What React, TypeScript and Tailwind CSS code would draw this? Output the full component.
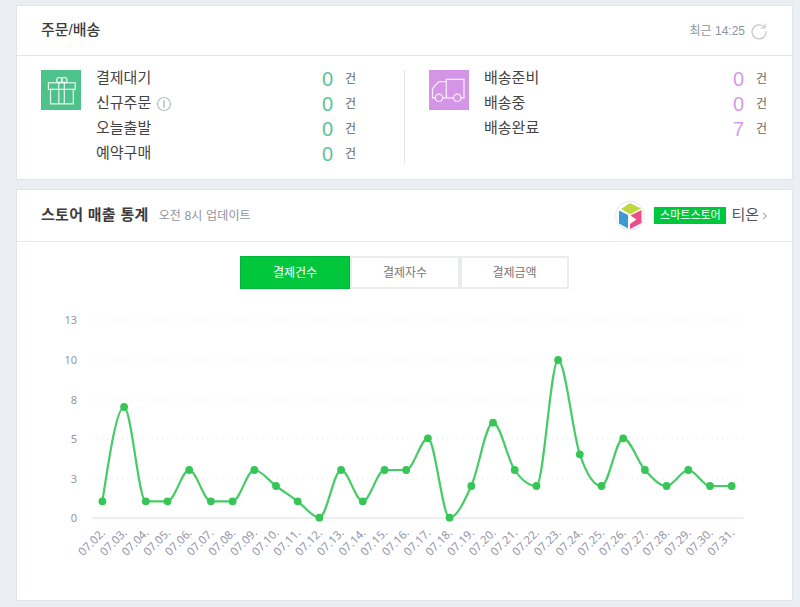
const KR = "font-['Liberation_Sans','Noto_Sans_CJK_KR',sans-serif]";

const dates = ["02","03","04","05","06","07","08","09","10","11","12","13","14","15","16","17","18","19","20","21","22","23","24","25","26","27","28","29","30","31"];
const vals = [1,7,1,1,3,1,1,3,2,1,0,3,1,3,3,5,0,2,6,3,2,10,4,2,5,3,2,3,2,2];
const yOf: Record<number, number> = {0:517.7,1:501.3,2:486,3:470,4:454.3,5:438.3,6:422.7,7:407,10:360};
const pts = vals.map((v, i) => [102.4 + i * 21.7, yOf[v]] as const);

function monotonePath(p: readonly (readonly [number, number])[]) {
  const n = p.length;
  const s: number[] = [];
  for (let i = 0; i < n - 1; i++) s.push((p[i + 1][1] - p[i][1]) / (p[i + 1][0] - p[i][0]));
  const t: number[] = new Array(n).fill(0);
  for (let i = 1; i < n - 1; i++) {
    const h = p[i + 1][0] - p[i][0];
    const h0 = p[i][0] - p[i - 1][0];
    const pp = (s[i - 1] * h + s[i] * h0) / (h0 + h);
    const sign = (a: number) => (a < 0 ? -1 : 1);
    t[i] = (sign(s[i - 1]) + sign(s[i])) * Math.min(Math.abs(s[i - 1]), Math.abs(s[i]), 0.5 * Math.abs(pp)) || 0;
  }
  t[0] = (3 * s[0] - t[1]) / 2;
  t[n - 1] = (3 * s[n - 2] - t[n - 2]) / 2;
  let d = `M${p[0][0]},${p[0][1]}`;
  for (let i = 0; i < n - 1; i++) {
    const dx = (p[i + 1][0] - p[i][0]) / 3;
    d += `C${(p[i][0] + dx).toFixed(1)},${(p[i][1] + dx * t[i]).toFixed(1)} ${(p[i + 1][0] - dx).toFixed(1)},${(p[i + 1][1] - dx * t[i + 1]).toFixed(1)} ${p[i + 1][0].toFixed(1)},${p[i + 1][1]}`;
  }
  return d;
}

function Row({ label, n, color, info }: { label: string; n: number; color: string; info?: boolean }) {
  return (
    <div className="flex items-center h-[25px]">
      <span className="flex-1 flex items-center text-[15px] text-[#444444]">
        {label}
        {info && (
          <svg width="16" height="16" viewBox="0 0 16 16" className="ml-[5px]">
            <circle cx="8" cy="8" r="6.5" fill="none" stroke="#b9bdc4" strokeWidth="1.2" />
            <rect x="7.2" y="4.5" width="1.6" height="7" fill="#b9bdc4" />
          </svg>
        )}
      </span>
      <span className={`text-[20px] leading-none ${color}`}>{n}</span>
      <span className="ml-[12px] w-[11px] text-[12px] text-[#666666]">건</span>
    </div>
  );
}

export default function App() {
  return (
    <div className={`w-[800px] h-[607px] overflow-hidden bg-[#ebeef3] pl-[16px] pt-[5px] ${KR}`}>
      <section className="w-[777px] h-[175px] bg-white border border-[#e1e4ea]">
        <header className="h-[50px] border-b border-[#e3e5ec] flex items-center justify-between pl-[24px] pr-[24px]">
          <h2 className="text-[15px] font-medium text-[#3c3c3c]">주문/배송</h2>
          <div className="flex items-center text-[12px] text-[#8f939a]">
            <span>최근 14:25</span>
            <svg width="18" height="18" viewBox="0 0 18 18" className="ml-[5px]">
              <path d="M14.6 5.6A7 7 0 1 0 16 9" fill="none" stroke="#c4c8ce" strokeWidth="1.2" />
              <path d="M15 1.5V6H10.6" fill="none" stroke="#c4c8ce" strokeWidth="1.2" />
            </svg>
          </div>
        </header>
        <div className="flex pl-[24px] pt-[14px]">
          <div className="w-[40px] h-[40px] bg-[#4dc28b]">
            <svg width="40" height="40" viewBox="0 0 40 40" fill="none" stroke="#ffffff" strokeOpacity="0.85" strokeWidth="1.2">
              <rect x="7.4" y="12.800" width="26.800" height="6.500" />
              <path d="M9.500 19.300V33.800H32.300V19.300" />
              <path d="M17.800 12.800V33.800M23.300 12.800V33.800" />
              <circle cx="18.300" cy="10" r="2.700" />
              <circle cx="23.300" cy="10" r="2.700" />
            </svg>
          </div>
          <div className="w-[260px] ml-[15px] -mt-[4px]">
            <Row label="결제대기" n={0} color="text-[#5cc497]" />
            <Row label="신규주문" n={0} color="text-[#5cc497]" info />
            <Row label="오늘출발" n={0} color="text-[#5cc497]" />
            <Row label="예약구매" n={0} color="text-[#5cc497]" />
          </div>
          <div className="w-px h-[94px] bg-[#e3e5ec] ml-[48px]" />
          <div className="w-[40px] h-[40px] bg-[#d595e6] ml-[24px]">
            <svg width="40" height="40" viewBox="0 0 40 40" fill="none" stroke="#ffffff" strokeOpacity="0.85" strokeWidth="1.2">
              <path d="M17.300 27.800V9.300H35V27.800H32M24.500 27.800H13.700M6.300 27.800H3.500V18.500L10 11.700H17.300" />
              <circle cx="10" cy="27.800" r="3.700" />
              <circle cx="28.300" cy="27.800" r="3.700" />
            </svg>
          </div>
          <div className="w-[283px] ml-[15px] -mt-[4px]">
            <Row label="배송준비" n={0} color="text-[#d79aea]" />
            <Row label="배송중" n={0} color="text-[#d79aea]" />
            <Row label="배송완료" n={7} color="text-[#d79aea]" />
          </div>
        </div>
      </section>

      <section className="w-[777px] h-[412px] mt-[9px] bg-white border border-[#e1e4ea]">
        <header className="h-[52px] border-b border-[#e8eaef] flex items-center justify-between pl-[24px] pr-[24px]">
          <div className="flex items-baseline">
            <h2 className="text-[15px] font-semibold text-[#3c3c3c] tracking-[0.3px]">스토어 매출 통계</h2>
            <span className="ml-[10px] text-[12px] tracking-[0.15px] text-[#8f939a]">오전 8시 업데이트</span>
          </div>
          <div className="flex items-center">
            <svg width="31" height="31" viewBox="0 0 31 31">
              <circle cx="15" cy="15.700" r="14.300" fill="#ffffff" stroke="#e9ebef" strokeWidth="1.200" />
              <path d="M15 3L26 8.500L15.500 14.500L6 9Z" fill="#bfd83f" />
              <path d="M4 10.500L13 15V28.500L4 23.500Z" fill="#3f97d4" />
              <path d="M26.500 10V23L15 29V24L21.500 19.500L15.500 15.500Z" fill="#ec4c87" />
            </svg>
            <span className="ml-[8px] w-[72px] h-[17px] bg-[#00c73c] text-white text-[11px] flex items-center justify-center leading-none">스마트스토어</span>
            <span className="ml-[5px] text-[15px] text-[#555555]">티온</span>
            <svg width="7" height="10" viewBox="0 0 7 10" className="ml-[2px]">
              <path d="M2 2L5.500 5L2 8" fill="none" stroke="#888888" strokeWidth="1" />
            </svg>
          </div>
        </header>

        <div className="flex pl-[223px] pt-[14px]">
          <div className="w-[110px] h-[33px] bg-[#00c73c] border border-[#00b636] text-white text-[12px] flex items-center justify-center">결제건수</div>
          <div className="w-[110px] h-[33px] border-2 border-[#ebecee] text-[#777777] text-[12px] flex items-center justify-center">결제자수</div>
          <div className="w-[109px] h-[33px] border-2 border-[#ebecee] text-[#777777] text-[12px] flex items-center justify-center">결제금액</div>
        </div>

        <svg width="775" height="310" viewBox="17 289 775 310" className="block">
          {[[320,"13"],[360,"10"],[400,"8"],[439,"5"],[479,"3"]].map(([y, t]) => (
            <g key={t as string}>
              <line x1="92" x2="744" y1={y as number} y2={y as number} stroke="#e4e6eb" strokeWidth="1" strokeDasharray="1 4" />
              <text x="77" y={(y as number) + 4} textAnchor="end" fontFamily="Noto Sans, sans-serif" fontSize="11" fill="#9296a8">{t}</text>
            </g>
          ))}
          <text x="77" y="522" textAnchor="end" fontFamily="Noto Sans, sans-serif" fontSize="11" fill="#9296a8">0</text>
          <line x1="92" x2="744" y1="518" y2="518" stroke="#e6e9f4" strokeWidth="1.500" />
          <path d={monotonePath(pts)} fill="none" stroke="#46cc66" strokeWidth="2.200" />
          {pts.map(([x, y], i) => (
            <circle key={i} cx={x} cy={y} r="3.900" fill="#36c657" />
          ))}
          {dates.map((d, i) => {
            const x = 106 + i * 21.7;
            return (
              <text key={d} x={x} y={533.5} textAnchor="end" transform={`rotate(-45 ${x} 533.5)`} fontFamily="Noto Sans, sans-serif" fontSize="11.500" fill="#9296a8">{`07.${d}.`}</text>
            );
          })}
        </svg>
      </section>
    </div>
  );
}
